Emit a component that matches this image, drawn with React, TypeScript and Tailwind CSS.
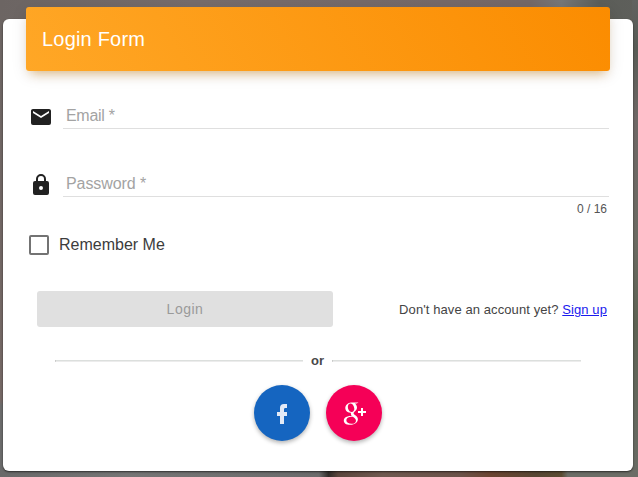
import { TiSocialGooglePlus } from "react-icons/ti";

const mailPath =
  "M20 8l-8 5-8-5V6l8 5 8-5m0-2H4c-1.11 0-2 .89-2 2v12a2 2 0 0 0 2 2h16a2 2 0 0 0 2-2V6c0-1.11-.9-2-2-2z";
const lockPath =
  "M12 17a2 2 0 0 0 2-2 2 2 0 0 0-2-2 2 2 0 0 0-2 2 2 2 0 0 0 2 2m6-9a2 2 0 0 1 2 2v10a2 2 0 0 1-2 2H6a2 2 0 0 1-2-2V10a2 2 0 0 1 2-2h1V6a5 5 0 0 1 5-5 5 5 0 0 1 5 5v2h1m-6-5a3 3 0 0 0-3 3v2h6V6a3 3 0 0 0-3-3z";

function Field({ label, path, spacing }: { label: string; path: string; spacing: string }) {
  return (
    <div className="flex h-6 items-center pr-px pl-[3px]">
      <svg viewBox="0 0 24 24" className="size-6 fill-[#212121]">
        <path d={path} />
      </svg>
      <label
        className={`ml-[10px] flex h-6 flex-1 items-center border-b border-[#dfdfdf] pl-[3px] pb-px text-[16px] text-[#a3a3a3] ${spacing}`}
      >
        {label}
      </label>
    </div>
  );
}

function Rule({ width }: { width: string }) {
  return <span className={`h-[2px] border-t border-b border-l border-t-[#dcdfdd] border-b-[#ececec] border-l-[#b5b5b5] ${width}`} />;
}

export default function App() {
  return (
    <div className="relative h-[477px] w-[638px] overflow-hidden bg-[#6f6664] pt-[19px] pl-[3px] font-['Liberation_Sans',Arial,sans-serif]">
      <div className="absolute inset-x-0 top-0 h-5 bg-[linear-gradient(90deg,#6c6563,#766c6b_30%,#756867_83%,#777777_88%,#5c5e59_94%,#5e5f5b)]" />
      <div className="absolute top-0 left-0 h-full w-1 bg-[linear-gradient(180deg,#6c6563,#756865_84%,#6b6b6b_85%)]" />
      <div className="absolute top-0 right-0 h-full w-[6px] bg-[linear-gradient(180deg,#606260,#585b55_10%,#6e6765_25%,#6b6a62_50%,#5d6253_68%,#696b64)]" />
      <div className="absolute inset-x-0 bottom-0 h-[7px] bg-[linear-gradient(90deg,#696969,#757575_20%,#6b6b6b_50%,#302c29_51.5%,#5b463d_53%,#6f5950_60%,#6b5249_72%,#6b4431_77%,#574633_84%,#5a4b31_88%,#6b6d66_89%)]" />

      <main className="relative flex h-[452px] w-[630px] flex-col rounded-[6px] bg-white px-[23px] shadow-[0_1px_2px_rgba(0,0,0,0.6)]">
        <header className="-mt-3 flex h-16 shrink-0 items-center rounded-[3px] bg-[linear-gradient(60deg,#ffa726,#fb8c00)] pl-4 text-[20px] tracking-[0.2px] text-white shadow-[0_4px_16px_rgba(0,0,0,0.1),0_7px_10px_-5px_rgba(220,130,0,0.45)]">
          Login Form
        </header>

        <div className="mt-[34px]">
          <Field label="Email *" path={mailPath} spacing="tracking-[-0.3px]" />
        </div>
        <div className="mt-11">
          <Field label="Password *" path={lockPath} spacing="tracking-[-0.08px]" />
        </div>
        <div className="mt-1 pr-[3px] text-right text-[12px] leading-4 text-[#555555]">0 / 16</div>

        <label className="mt-[18px] ml-[3px] flex h-5 items-center text-[16px] text-[#3c3c3c]">
          <span className="mr-[10px] size-5 rounded-[2px] border-2 border-[#737373]" />
          Remember Me
        </label>

        <div className="mt-9 flex h-9 items-center justify-between pr-[3px] pl-[11px]">
          <button disabled className="h-9 w-[296px] rounded-[3px] bg-[#e0e0e0] text-[14px] tracking-[0.5px] text-[#9a9a9a]">
            Login
          </button>
          <p className="pt-[2px] text-[13px] tracking-[0.09px] text-[#444444]">
            Don't have an account yet? <a className="text-[#1a1aee] underline">Sign up</a>
          </p>
        </div>

        <div className="mt-[26px] ml-[29px] flex h-4 items-center">
          <Rule width="w-[248px]" />
          <span className="w-[29px] text-center text-[13px] font-bold leading-4 text-[#484848]">or</span>
          <Rule width="w-[249px]" />
        </div>

        <div className="mt-4 ml-[228px] flex gap-4">
          <button className="flex size-14 items-center justify-center rounded-full bg-[#1565c0] pt-[2px] shadow-[0_2px_4px_rgba(0,0,0,0.3)]">
            <svg viewBox="0 0 24 24" className="size-6 fill-[#e3eaf6]">
              <path d="M17 2v4h-2c-.69 0-1 .81-1 1.5V10h3v4h-3v8h-4v-8H7v-4h3V6a4 4 0 0 1 4-4h3z" />
            </svg>
          </button>
          <button className="relative flex size-14 items-center justify-center rounded-full bg-[#f50057] shadow-[0_2px_4px_rgba(0,0,0,0.3)]">
            <TiSocialGooglePlus className="size-9 shrink-0 text-white" />
            <svg viewBox="0 0 8 8" className="absolute top-[23px] left-8 size-2 fill-white">
              <path d="M3 0h2v3h3v2H5v3H3V5H0V3h3z" />
            </svg>
          </button>
        </div>
      </main>
    </div>
  );
}
